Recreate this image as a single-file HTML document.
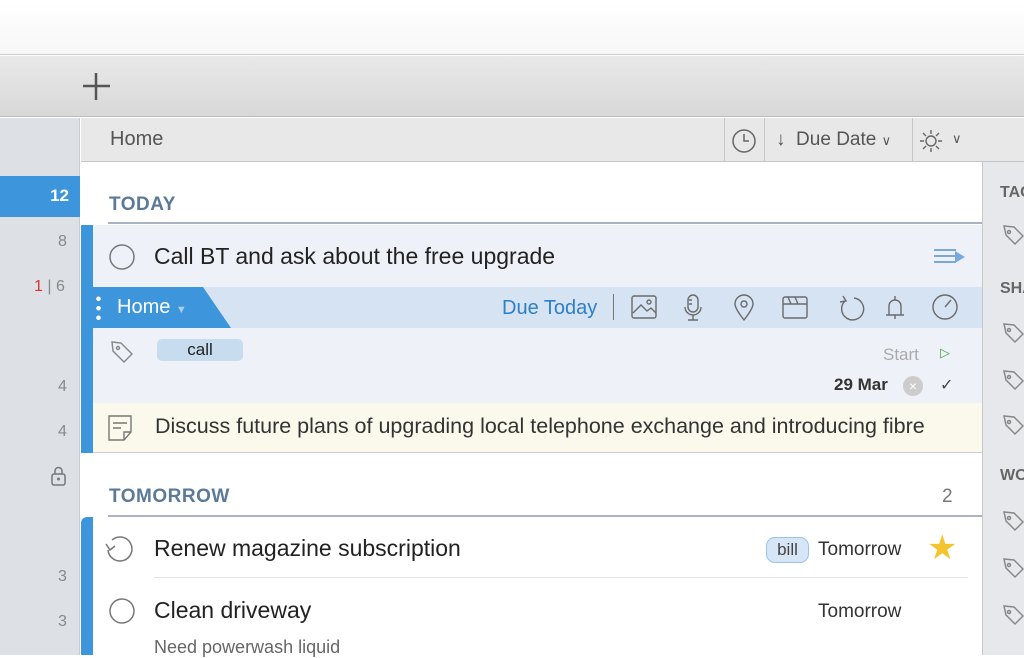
<!DOCTYPE html>
<html><head><style>
*{margin:0;padding:0;box-sizing:border-box}
body{width:1024px;height:655px;overflow:hidden;font-family:"Liberation Sans",sans-serif;background:#fff;position:relative;color:#222}
.a{position:absolute;white-space:nowrap}
.g{color:#888;font-size:16px}
svg{position:absolute}
</style></head><body>
<div class="a" style="left:0;top:0;width:1024px;height:55px;background:linear-gradient(#fff,#f7f7f7);border-bottom:1px solid #ccc"></div>
<div class="a" style="left:0;top:56px;width:1024px;height:61px;background:linear-gradient(#e9e9e9,#d8d8d8);border-bottom:1px solid #bbb"></div>
<svg style="left:82px;top:72px" width="30" height="30"><path d="M14 1V28M1 14H28" stroke="#555" stroke-width="2.5"/></svg>
<div class="a" style="left:0;top:118px;width:80px;height:537px;background:#dde0e5;border-right:1px solid #c8cbd0"></div>
<div class="a" style="left:0;top:176px;width:80px;height:41px;background:#3d95db;color:#fff;font-size:17px;font-weight:bold;text-align:right;padding:10px 11px 0 0">12</div>
<div class="a g" style="left:58px;top:233px">8</div>
<div class="a g" style="left:34px;top:278px"><span style="color:#d33">1</span> | 6</div>
<div class="a g" style="left:58px;top:378px">4</div>
<div class="a g" style="left:58px;top:423px">4</div>
<svg style="left:50px;top:466px" width="18" height="22"><rect x="2" y="8" width="13" height="11" rx="2" fill="none" stroke="#777" stroke-width="1.5"/><path d="M5 8V5a3.5 3.5 0 0 1 7 0v3" fill="none" stroke="#777" stroke-width="1.5"/><circle cx="8.5" cy="13" r="1.5" fill="#777"/></svg>
<div class="a g" style="left:58px;top:568px">3</div>
<div class="a g" style="left:58px;top:613px">3</div>
<div class="a" style="left:81px;top:118px;width:901px;height:44px;background:#e8e8e8;border-bottom:1px solid #c5c5c5"></div>
<div class="a" style="left:110px;top:128px;font-size:20px;color:#555">Home</div>
<div class="a" style="left:724px;top:118px;width:1px;height:44px;background:#c8c8c8"></div>
<div class="a" style="left:764px;top:118px;width:1px;height:44px;background:#c8c8c8"></div>
<div class="a" style="left:912px;top:118px;width:1px;height:44px;background:#c8c8c8"></div>
<svg style="left:731px;top:128px" width="26" height="26"><circle cx="13" cy="13" r="11" fill="none" stroke="#666" stroke-width="1.5"/><path d="M13 6v7h5" fill="none" stroke="#666" stroke-width="1.5"/></svg>
<div class="a" style="left:776px;top:129px;font-size:19px;color:#555">&#8595;&nbsp; Due Date <span style="font-size:13px">&#8744;</span></div>
<svg style="left:919px;top:129px" width="24" height="24"><circle cx="12" cy="12" r="5" fill="none" stroke="#666" stroke-width="1.4"/><path d="M12 1v4M12 19v4M1 12h4M19 12h4M4 4l3 3M17 17l3 3M4 20l3-3M17 7l3-3" stroke="#666" stroke-width="1.4"/></svg>
<div class="a" style="left:952px;top:131px;font-size:13px;color:#555">&#8744;</div>
<div class="a" style="left:982px;top:118px;width:42px;height:537px;background:#e6e8ec;border-left:1px solid #c8c8c8"></div>
<div class="a" style="left:982px;top:118px;width:42px;height:44px;background:#e8e8e8;border-bottom:1px solid #c5c5c5"></div>
<div class="a" style="left:1000px;top:184px;font-size:16px;font-weight:bold;color:#666">TAGS</div>
<div class="a" style="left:1000px;top:280px;font-size:16px;font-weight:bold;color:#666">SHARED</div>
<div class="a" style="left:1000px;top:467px;font-size:16px;font-weight:bold;color:#666">WORK</div>
<svg style="left:1000px;top:222px" width="24" height="420" fill="none" stroke="#888" stroke-width="1.5">
<g id="t"><path d="M4 4l10 1 9 9-8 8-9-9z"/><circle cx="9" cy="10" r="1.5"/></g>
<use href="#t" y="98"/><use href="#t" y="145"/><use href="#t" y="190"/><use href="#t" y="286"/><use href="#t" y="333"/><use href="#t" y="380"/>
</svg>
<div class="a" style="left:109px;top:194px;font-size:19px;font-weight:bold;color:#5a7a98;letter-spacing:.5px">TODAY</div>
<div class="a" style="left:108px;top:222px;width:874px;height:2px;background:#aab4c0"></div>
<div class="a" style="left:81px;top:225px;width:12px;height:228px;background:#3d95db"></div>
<div class="a" style="left:93px;top:225px;width:889px;height:62px;background:#eef1f7"></div>
<svg style="left:108px;top:243px" width="28" height="28"><circle cx="14" cy="14" r="12" fill="none" stroke="#777" stroke-width="1.5"/></svg>
<div class="a" style="left:154px;top:243px;font-size:23px">Call BT and ask about the free upgrade</div>
<svg style="left:933px;top:247px" width="36" height="20"><path d="M1 3h22M1 9h22M1 15h22" stroke="#7aa8d8" stroke-width="2"/><path d="M22 4l10 6-10 6z" fill="#7aa8d8"/></svg>
<div class="a" style="left:93px;top:287px;width:889px;height:41px;background:#d6e3f2"></div>
<div class="a" style="left:93px;top:287px;width:138px;height:41px;background:#3d95db;clip-path:polygon(0 0,110px 0,138px 41px,0 41px)"></div>
<div class="a" style="left:96px;top:294px;width:5px;height:28px;background:radial-gradient(circle,#fff 2px,transparent 2.5px) 0 0/5px 9.5px"></div>
<div class="a" style="left:117px;top:296px;font-size:20px;color:#fff">Home <span style="font-size:11px;color:#a8cdf0">&#9660;</span></div>
<div class="a" style="left:502px;top:297px;font-size:20px;color:#2d7fc6">Due Today</div>
<div class="a" style="left:613px;top:294px;width:1px;height:26px;background:#777"></div>
<svg style="left:630px;top:293px" width="330" height="30" fill="none" stroke="#6a6a6a" stroke-width="1.4">
<rect x="2" y="3" width="24" height="22" rx="2"/><path d="M3 20l8-8 6 6 4-3 5 5"/><circle cx="19" cy="9" r="2"/>
<rect x="58" y="2" width="10" height="17" rx="5"/><path d="M55 14a8 8 0 0 0 16 0M63 22v5M58 27h10M59 7h3M59 11h3"/>
<path d="M114 27c-7-9-9-13-9-16a9 9 0 0 1 18 0c0 3-2 7-9 16z"/><circle cx="114" cy="11" r="3"/>
<rect x="153" y="4" width="24" height="21" rx="2"/><path d="M153 11h24M158 4l3 7M165 4l3 7"/>
<path d="M224 5a11 11 0 1 1-9 3M213 3l3 5-6 1"/>
<path d="M256 22h18M259 22v-9a6 6 0 0 1 12 0v9M265 22v4M265 3v4"/>
<circle cx="315" cy="14" r="12"/><path d="M315 14l6-7"/>
</svg>
<div class="a" style="left:93px;top:328px;width:889px;height:75px;background:#eef1f7"></div>
<svg style="left:108px;top:338px" width="28" height="28" fill="none" stroke="#888" stroke-width="1.4"><path d="M4 4l9 1 11 11-8 8-11-11z"/><circle cx="10" cy="10" r="1.5"/></svg>
<div class="a" style="left:157px;top:339px;width:86px;height:22px;background:#c8dcf0;border-radius:5px;text-align:center;font-size:17px;line-height:22px">call</div>
<div class="a" style="left:883px;top:345px;font-size:17px;color:#aaa">Start</div>
<div class="a" style="left:940px;top:345px;font-size:13px;color:#4a4">&#9655;</div>
<div class="a" style="left:834px;top:375px;font-size:17px;font-weight:bold;color:#333">29 Mar</div>
<div class="a" style="left:903px;top:376px;width:20px;height:20px;border-radius:50%;background:#ccc;color:#fff;font-size:14px;text-align:center;line-height:20px">&#215;</div>
<div class="a" style="left:940px;top:375px;font-size:16px;color:#444">&#10003;</div>
<div class="a" style="left:93px;top:403px;width:889px;height:50px;background:#faf9ec;border-bottom:1px solid #ccd"></div>
<svg style="left:106px;top:413px" width="28" height="30" fill="none" stroke="#777" stroke-width="1.4"><path d="M3 3h22v16l-7 8H3z"/><path d="M7 10h14M7 15h8M18 27v-8h7"/></svg>
<div class="a" style="left:155px;top:414px;font-size:21.5px;color:#333">Discuss future plans of upgrading local telephone exchange and introducing fibre</div>
<div class="a" style="left:109px;top:486px;font-size:19px;font-weight:bold;color:#5a7a98;letter-spacing:.5px">TOMORROW</div>
<div class="a" style="left:942px;top:486px;font-size:19px;color:#777">2</div>
<div class="a" style="left:108px;top:515px;width:874px;height:2px;background:#aab4c0"></div>
<div class="a" style="left:81px;top:517px;width:12px;height:138px;background:#3d95db;border-radius:6px 0 0 0"></div>
<svg style="left:103px;top:534px" width="34" height="30" fill="none" stroke="#777" stroke-width="1.5"><path d="M9 6a12 12 0 1 1-4 10M3 10l4 6 5-4"/></svg>
<div class="a" style="left:154px;top:535px;font-size:23px">Renew magazine subscription</div>
<div class="a" style="left:766px;top:537px;width:43px;height:26px;border:1.5px solid #9cc2e8;background:#d6e6f6;border-radius:9px;font-size:17px;text-align:center;line-height:23px;color:#444">bill</div>
<div class="a" style="left:818px;top:539px;font-size:19px;color:#333">Tomorrow</div>
<div class="a" style="left:927px;top:528px;font-size:34px;color:#f4c430">&#9733;</div>
<div class="a" style="left:154px;top:577px;width:814px;height:1px;background:#e4e4e4"></div>
<svg style="left:108px;top:597px" width="28" height="28"><circle cx="14" cy="14" r="12" fill="none" stroke="#777" stroke-width="1.5"/></svg>
<div class="a" style="left:154px;top:597px;font-size:23px">Clean driveway</div>
<div class="a" style="left:818px;top:601px;font-size:19px;color:#333">Tomorrow</div>
<div class="a" style="left:154px;top:637px;font-size:18px;color:#666">Need powerwash liquid</div>
</body></html>
